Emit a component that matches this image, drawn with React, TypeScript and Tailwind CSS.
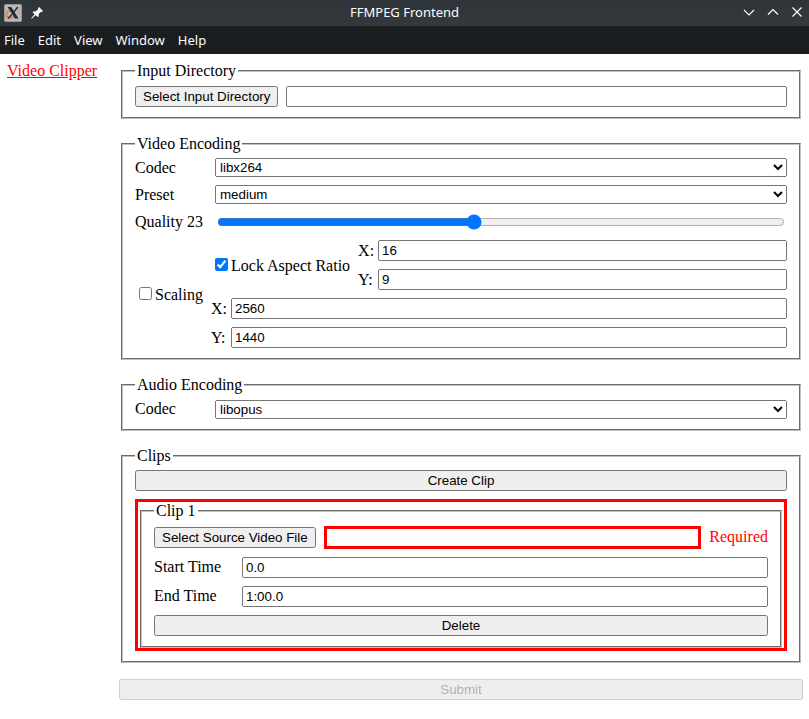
import React, { useState } from 'react';
import type { ReactNode } from 'react';

const menus = ['File', 'Edit', 'View', 'Window', 'Help'];

function TextInput({ id, label, value }: { id?: string; label?: string; value: string }) {
  return (
    <input
      id={id}
      type="text"
      aria-label={label}
      defaultValue={value}
      className="[all:revert] min-w-0! flex-1!"
    />
  );
}

function Button({ children }: { children: ReactNode }) {
  return (
    <button type="button" className="[all:revert]">
      {children}
    </button>
  );
}

function Group({ title, children }: { title: string; children: ReactNode }) {
  return (
    <fieldset className="[all:revert] min-w-0! border-[#c0c0c0]!">
      <legend className="[all:revert]">{title}</legend>
      <div className="flex flex-col gap-2">{children}</div>
    </fieldset>
  );
}

function SelectRow({ id, label, options }: { id: string; label: string; options: string[] }) {
  return (
    <div className="flex h-[19px] items-center gap-2">
      <label htmlFor={id} className="w-[72px]">
        {label}
      </label>
      <select id={id} className="[all:revert] min-w-0! flex-1!">
        {options.map((option) => (
          <option key={option}>{option}</option>
        ))}
      </select>
    </div>
  );
}

function AxisRow({ id, axis, value }: { id: string; axis: string; value: string }) {
  return (
    <div className="flex items-center gap-1">
      <label htmlFor={id} className="w-4">
        {axis}:
      </label>
      <TextInput id={id} value={value} />
    </div>
  );
}

function TimeRow({ id, label, value }: { id: string; label: string; value: string }) {
  return (
    <div className="flex items-center gap-2">
      <label htmlFor={id} className="w-20">
        {label}
      </label>
      <TextInput id={id} value={value} />
    </div>
  );
}

function TitleBar() {
  return (
    <header className="grid h-[26px] grid-cols-[1fr_auto_1fr] items-center bg-linear-to-b from-[#2f3438] to-[#34393d] px-1 text-[13px] text-[#fcfcfc] font-['Noto_Sans',sans-serif]">
      <div className="flex items-center gap-2">
        <svg width="18" height="18" viewBox="0 0 18 18" aria-hidden="true">
          <rect x="0.5" y="0.5" width="17" height="17" rx="1" fill="#b4b9bc" stroke="#929799" />
          <path d="M5.5 6.2C1.8 8 1.2 13 5 13.9 7 14.3 9 13.4 10.5 12.4" fill="none" stroke="#ee7a45" strokeWidth="1.7" />
          <path d="M11.5 5.2C15.5 4.6 17 8 14.8 10.6" fill="none" stroke="#ee9a6c" strokeWidth="1.5" />
          <path d="M3.6 3h3.6l7.4 11.5H11z" fill="#26292b" />
          <path d="M13.8 3 9.8 8M8 10.2 4.2 14.5" stroke="#26292b" strokeWidth="1.3" />
        </svg>
        <svg width="14" height="14" viewBox="0 0 14 14" aria-hidden="true" fill="#fcfcfc">
          <path d="M9 1 13 5 12 6 11 5.8 8.6 8.2 8.8 10.2 7.8 11 5.6 9.2 1.8 12.8 1.2 12.2 4.6 8.2 2.6 6.4 3.6 5.2 5.6 5.4 8.2 3 8 2z" />
        </svg>
      </div>
      <h1 className="pb-0.5">FFMPEG Frontend</h1>
      <div className="flex items-center justify-end gap-2">
        <button type="button" aria-label="Minimize">
          <svg width="16" height="16" viewBox="0 0 16 16" fill="none" stroke="#fcfcfc" strokeWidth="1.2">
            <path d="M3 5 8 10 13 5" />
          </svg>
        </button>
        <button type="button" aria-label="Maximize">
          <svg width="16" height="16" viewBox="0 0 16 16" fill="none" stroke="#fcfcfc" strokeWidth="1.2">
            <path d="M3 9.5 8 4.5 13 9.5" />
          </svg>
        </button>
        <button type="button" aria-label="Close">
          <svg width="16" height="16" viewBox="0 0 16 16" fill="none" stroke="#fcfcfc" strokeWidth="1.2">
            <path d="M3.5 2.5 12.5 11.5M12.5 2.5 3.5 11.5" />
          </svg>
        </button>
      </div>
    </header>
  );
}

export default function App() {
  const [quality, setQuality] = useState(23);

  return (
    <div className="min-h-screen bg-white text-base text-black [line-height:normal] font-['Liberation_Serif',serif]">
      <TitleBar />
      <nav className="flex h-7 items-center gap-[13px] bg-[#1b1e21] px-1 text-[13px] text-[#fcfcfc] font-['Noto_Sans',sans-serif]">
        {menus.map((menu) => (
          <button key={menu} type="button">
            {menu}
          </button>
        ))}
      </nav>

      <div className="flex pt-2 pr-1.5 pb-2 pl-[7px]">
        <aside className="w-28 shrink-0">
          <a href="#clipper" className="text-[#ff0000] underline">
            Video Clipper
          </a>
        </aside>

        <form className="flex min-w-0 flex-1 flex-col gap-4">
          <Group title="Input Directory">
            <div className="flex items-center gap-2">
              <Button>Select Input Directory</Button>
              <TextInput label="Input directory" value="" />
            </div>
          </Group>

          <Group title="Video Encoding">
            <SelectRow id="video-codec" label="Codec" options={['libx264', 'libx265']} />
            <SelectRow id="preset" label="Preset" options={['medium', 'slow', 'fast']} />
            <div className="flex items-center gap-2">
              <label htmlFor="quality" className="w-[72px]">
                Quality {quality}
              </label>
              <input
                id="quality"
                type="range"
                min={0}
                max={51}
                value={quality}
                onChange={(event) => setQuality(Number(event.target.value))}
                className="[all:revert] min-w-0! flex-1!"
              />
            </div>
            <div className="flex items-center gap-2">
              <label className="shrink-0">
                <input type="checkbox" className="[all:revert]" />
                Scaling
              </label>
              <div className="flex min-w-0 flex-1 flex-col gap-2">
                <div className="flex items-center gap-2">
                  <label className="shrink-0">
                    <input type="checkbox" defaultChecked className="[all:revert]" />
                    Lock Aspect Ratio
                  </label>
                  <div className="flex min-w-0 flex-1 flex-col gap-2">
                    <AxisRow id="ratio-x" axis="X" value="16" />
                    <AxisRow id="ratio-y" axis="Y" value="9" />
                  </div>
                </div>
                <AxisRow id="scale-x" axis="X" value="2560" />
                <AxisRow id="scale-y" axis="Y" value="1440" />
              </div>
            </div>
          </Group>

          <Group title="Audio Encoding">
            <SelectRow id="audio-codec" label="Codec" options={['libopus', 'aac']} />
          </Group>

          <Group title="Clips">
            <Button>Create Clip</Button>
            <div className="border-3 border-[#ff0000]">
              <Group title="Clip 1">
                <div className="flex items-center gap-2">
                  <Button>Select Source Video File</Button>
                  <input
                    type="text"
                    aria-label="Source video file"
                    className="[all:revert] min-w-0! flex-1! border-3! border-solid! border-[#ff0000]!"
                  />
                  <span className="text-[#ff0000]">Required</span>
                </div>
                <TimeRow id="start-time" label="Start Time" value="0.0" />
                <TimeRow id="end-time" label="End Time" value="1:00.0" />
                <Button>Delete</Button>
              </Group>
            </div>
          </Group>

          <button type="submit" disabled className="[all:revert]">
            Submit
          </button>
        </form>
      </div>
    </div>
  );
}
